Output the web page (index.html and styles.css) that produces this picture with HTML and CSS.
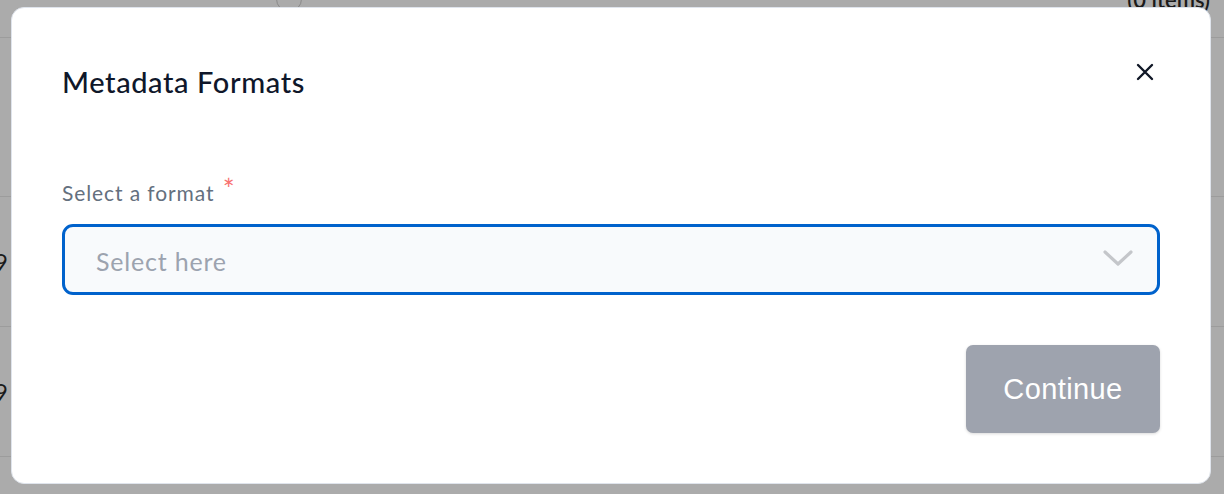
FILE: index.html
```html
<!DOCTYPE html>
<html lang="en">
<head>
    <meta charset="UTF-8">
    <meta name="viewport" content="width=device-width, initial-scale=1.0">
    <title>Metadata Formats</title>
    <link rel="stylesheet" href="styles.css">
</head>
<body>
    <!-- page behind the modal -->
    <div class="page">
        <div class="page-top">
            <span class="circle"></span>
            <span class="items">(0 items)</span>
        </div>
        <div class="page-row short"></div>
        <div class="page-row"><span class="num">9</span></div>
        <div class="page-row"><span class="num">9</span></div>
        <div class="page-row last">
            <span class="num small">12.0951</span>
            <span class="pill"></span>
        </div>
    </div>

    <div class="overlay">
        <div class="modal">
            <div class="modal-header">
                <h2>Metadata Formats</h2>
                <button class="close-btn" type="button" aria-label="Close">
                    <svg width="18" height="18" viewBox="0 0 18 18">
                        <path d="M2 2 L16 16 M16 2 L2 16" stroke="#111827" stroke-width="2.4" stroke-linecap="round"/>
                    </svg>
                </button>
            </div>

            <div class="form-group">
                <label>Select a format <span class="required">*</span></label>
                <div class="select-box">
                    <span class="placeholder">Select here</span>
                    <svg class="chevron" width="30" height="18" viewBox="0 0 30 18">
                        <path d="M2 3 L15 15 L28 3" fill="none" stroke="#c4c6ca" stroke-width="3.2" stroke-linecap="round" stroke-linejoin="round"/>
                    </svg>
                </div>
            </div>

            <div class="modal-footer">
                <button class="continue-btn" type="button" disabled>Continue</button>
            </div>
        </div>
    </div>
</body>
</html>
```

FILE: styles.css
```css
* {
    margin: 0;
    padding: 0;
    box-sizing: border-box;
    font-family: 'Lato', 'Noto Sans', sans-serif;
}
body {
    background-color: #ababab;
    width: 1224px;
    height: 494px;
    overflow: hidden;
    position: relative;
}
.page {
    color: #1a1a1a;
}
.page-top {
    height: 38px;
    border-bottom: 1px solid #9c9c9c;
    position: relative;
}
.circle {
    position: absolute;
    left: 276px;
    top: -14px;
    width: 26px;
    height: 26px;
    border: 1.5px solid #8a8a8a;
    border-radius: 50%;
}
.items {
    position: absolute;
    right: 14px;
    top: -14px;
    font-size: 22px;
    font-weight: 600;
}
.page-row {
    height: 130px;
    border-bottom: 1px solid #9c9c9c;
    display: flex;
    align-items: center;
}
.page-row.short {
    height: 159px;
}
.num {
    font-size: 24px;
    margin-left: -6px;
}
.page-row.last {
    align-items: flex-end;
    height: 60px;
    border-bottom: none;
}
.num.small {
    font-size: 18px;
    margin-left: 0;
}
.pill {
    margin-left: 80px;
    width: 98px;
    height: 12px;
    background-color: #87a090;
    border-radius: 12px 12px 0 0;
}
.overlay {
    position: absolute;
    inset: 0;
    padding: 7px 13px 10px 11px;
}
.modal {
    height: 477px;
    background-color: white;
    border: 1px solid #dfe4ec;
    border-radius: 13px;
    padding: 56px 50px 50px 50px;
    display: flex;
    flex-direction: column;
}
.modal-header {
    display: flex;
    justify-content: space-between;
    align-items: center;
    margin-bottom: 81px;
}
h2 {
    font-size: 29px;
    font-weight: 500;
    color: #0f172a;
    letter-spacing: 0.6px;
}
.close-btn {
    background: none;
    border: none;
    cursor: pointer;
    margin-right: 6px;
    margin-top: -1px;
    align-self: flex-start;
    display: flex;
}
.form-group {
    margin-bottom: 50px;
}
label {
    display: block;
    font-size: 21px;
    letter-spacing: 0.9px;
    color: #64707e;
    margin-bottom: 19px;
}
.required {
    color: #f87171;
    vertical-align: 1px;
    font-size: 28px;
    line-height: 0;
    margin-left: 2px;
}
.select-box {
    height: 71px;
    border: 3px solid #0062cc;
    border-radius: 11px;
    background-color: #f8fafc;
    display: flex;
    align-items: center;
    justify-content: space-between;
    padding: 0 24px 0 31px;
}
.placeholder {
    font-size: 25px;
    letter-spacing: 0.8px;
    color: #9ca3af;
    margin-top: 2px;
}
.chevron {
    margin-top: -3px;
}
.modal-footer {
    display: flex;
    justify-content: flex-end;
}
.continue-btn {
    width: 194px;
    height: 88px;
    background-color: #9ea3ae;
    color: white;
    border: none;
    border-radius: 7px;
    font-size: 29px;
    letter-spacing: 0.4px;
    box-shadow: 0 1px 3px rgba(0, 0, 0, 0.15);
    font-family: 'Liberation Sans', sans-serif;
}
```
